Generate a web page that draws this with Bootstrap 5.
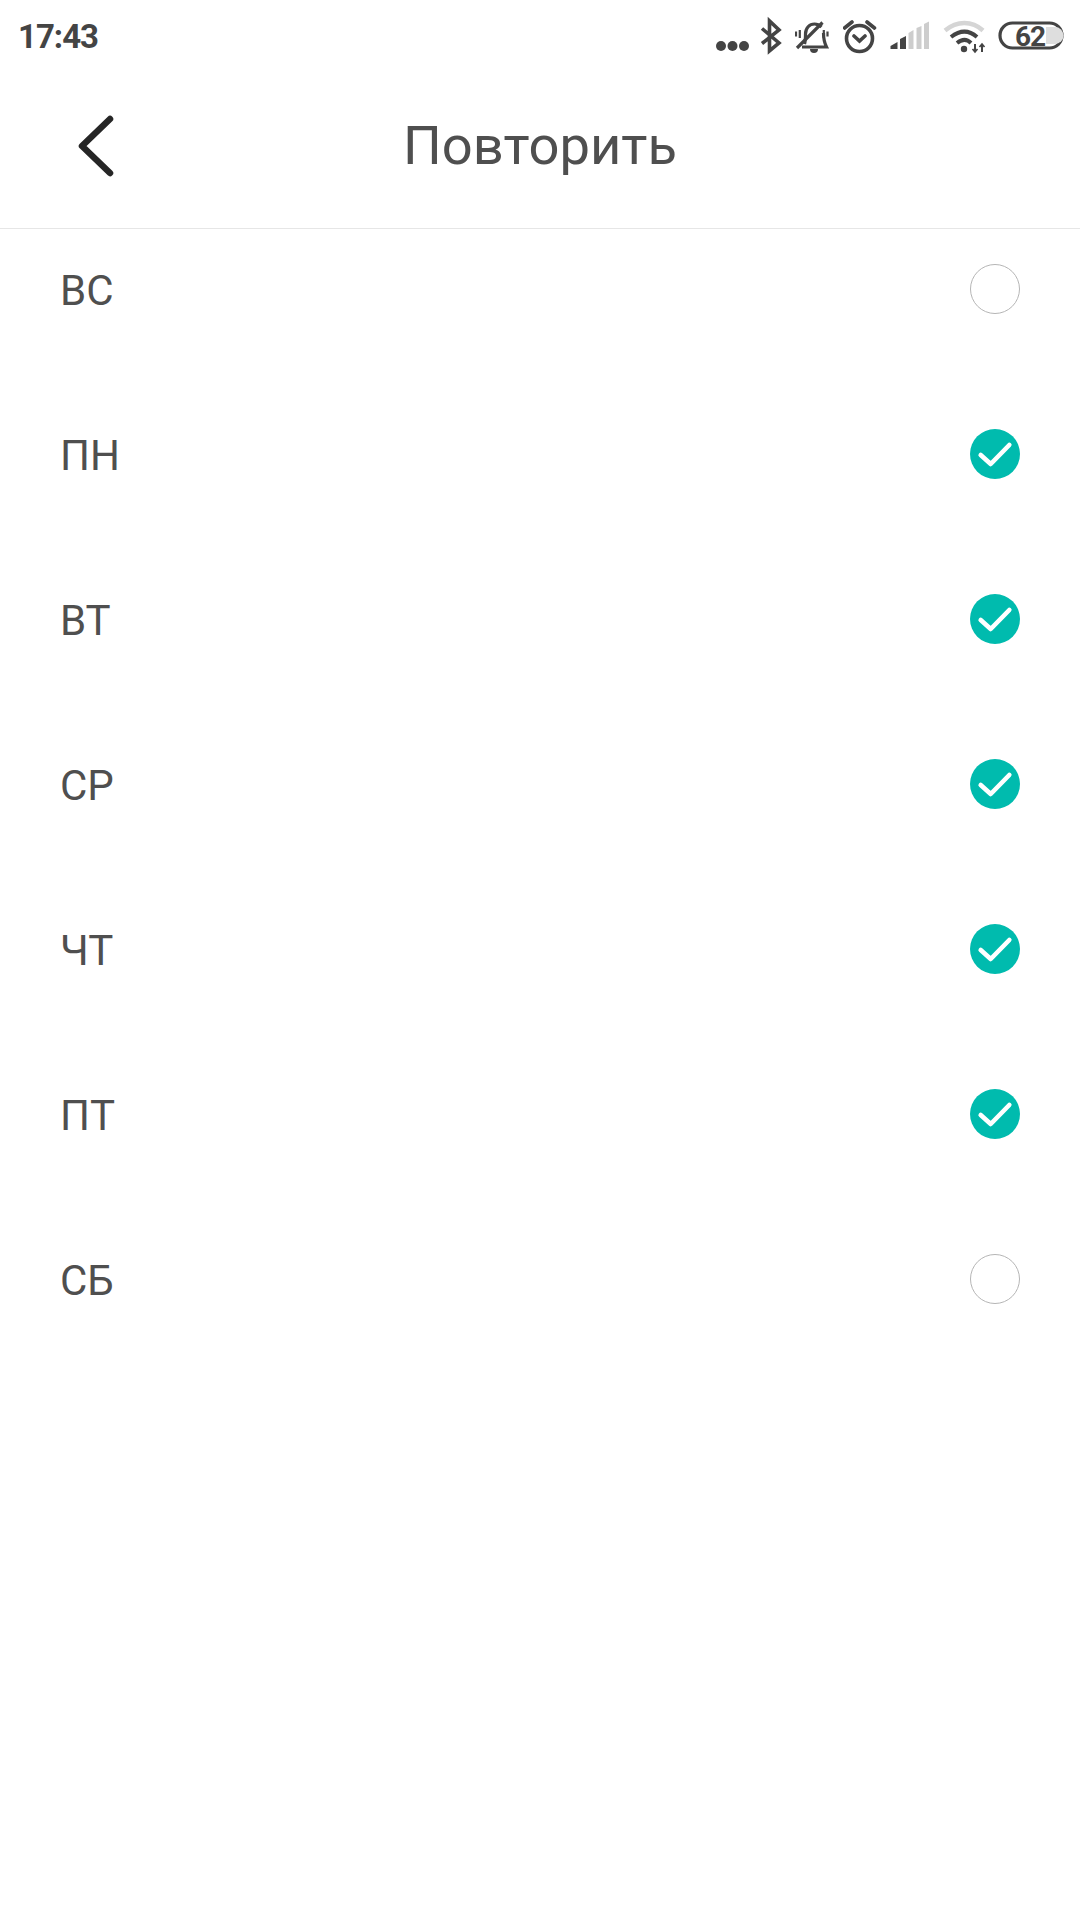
<!DOCTYPE html>
<html lang="ru">
<head>
    <meta charset="UTF-8">
    <meta name="viewport" content="width=device-width, initial-scale=1.0">
    <title>Повторить</title>
    <link rel="stylesheet" href="https://cdn.jsdelivr.net/npm/bootstrap@5.3.0/dist/css/bootstrap.min.css">
    <style>
        body {
            font-family: Roboto, "Liberation Sans", sans-serif;
            color: #4f4f4f;
            background: #fff;
            width: 1080px;
            height: 1920px;
            overflow: hidden;
        }
        .status-bar { height: 64px; padding: 0 16px 0 18px; }
        .status-time { font-size: 33px; font-weight: 700; letter-spacing: -1px; line-height: 1; color: #444; margin-top: 20px; }
        .status-icons { margin-top: 16px; }
        .status-icons svg { display: block; height: 40px; }
        .batt-level { letter-spacing: -1px; }
        .page-head { height: 165px; border-bottom: 1px solid #e6e6e6; }
        .head-side { width: 160px; padding-left: 78px; }
        .page-title { font-size: 54.3px; font-weight: 400; line-height: 1; margin: 0; color: #4f4f4f; }
        .day-list { padding: 35px 61px 0 60px; gap: 115px; }
        .day-row { height: 50px; }
        .day-name { font-size: 42px; line-height: 50px; position: relative; top: 2px; }
        .day-check { width: 50px; height: 50px; margin-right: -1px; display: block; }
    </style>
</head>
<body>
    <!-- status bar -->
    <div class="status-bar d-flex justify-content-between align-items-start">
        <div class="status-time">17:43</div>
        <div class="status-icons d-flex">
            <svg width="33" viewBox="716 16 33 40" fill="#444"><circle cx="721" cy="46" r="5"/><circle cx="732.5" cy="46" r="5"/><circle cx="744" cy="46" r="5"/></svg>
            <svg width="46" viewBox="749 16 46 40" fill="none" stroke="#444" stroke-width="3.6"><path d="M762 28.500 779 43 769.500 51V21L779 30 762 43.500"/></svg>
            <svg width="48" viewBox="795 16 48 40" fill="none" stroke="#444"><path d="M822.500 22.500 797 48" stroke-width="3.200"/><path d="M804.500 44c1-3 1-6 1-10 0-6 4-10 9-10 3 0 5 1 7 3M823.500 33c0 5 1 10 3 14H802" stroke-width="3.200"/><path d="M810 49h8a4 4 0 0 1-8 0z" fill="#444" stroke="none"/><path d="M796 31.500v5M799.800 30v8M823.800 30v8M827.500 31.500v5" stroke-width="2.200"/></svg>
            <svg width="47" viewBox="843 16 47 40" fill="none" stroke="#444" stroke-width="3.600"><circle cx="859.500" cy="38.500" r="13"/><path d="M844.500 28 852 22M867 22 874.500 28M854 36 859.500 41 865 36" stroke-linecap="round"/></svg>
            <svg width="53" viewBox="890 16 53 40"><path d="M890.500 49v-3l7-4v7zM900 49v-10l6-3v13z" fill="#444"/><path d="M908.500 49V33l5-3v19zM916.500 49V28l5-2v23zM924 49V24l5-2.500v27.500z" fill="#cdcdcd"/></svg>
            <svg width="55" viewBox="943 16 55 40" fill="none" stroke="#444"><path d="M945 30.500c12-10 27-10 38 0" stroke="#d5d5d5" stroke-width="4.400"/><path d="M951 37c9-7 18-7 26 0M957 43c5-4 10-4 14 0" stroke-width="4"/><circle cx="964" cy="49" r="3.200" fill="#444" stroke="none"/><path d="M975 44v8M982 44v8" stroke-width="2"/><path d="M972.500 49 975 52 977.500 49M979.500 47 982 44 984.500 47" stroke-width="1.600"/></svg>
            <svg width="66" viewBox="998 16 66 40"><rect x="1000" y="23" width="62" height="25" rx="12.500" fill="none" stroke="#444" stroke-width="3.200"/><path d="M1046 27h9a8.500 8.500 0 0 1 0 17h-9z" fill="#dedede"/><text class="batt-level" x="1030" y="45.500" text-anchor="middle" font-family="Roboto" font-weight="700" font-size="28" fill="#444">62</text></svg>
        </div>
    </div>

    <!-- header -->
    <div class="page-head d-flex align-items-center">
        <div class="head-side">
            <svg width="36" height="62" viewBox="0 0 36 62" class="d-block" fill="none" stroke="#262626" stroke-width="6.500" stroke-linecap="round" stroke-linejoin="round"><path d="M32 4 4 31 32 58"/></svg>
        </div>
        <h1 class="page-title flex-fill text-center">Повторить</h1>
        <div class="head-side"></div>
    </div>

    <!-- days -->
    <div class="day-list d-flex flex-column" id="days"></div>

    <script>
        const days = [
            ['ВС', false], ['ПН', true], ['ВТ', true], ['СР', true],
            ['ЧТ', true], ['ПТ', true], ['СБ', false]
        ];
        const on = '<svg class="day-check" viewBox="0 0 50 50"><circle cx="25" cy="25" r="25" fill="#00bbae"/><path d="M10.700 26 20.700 35 39.300 16" fill="none" stroke="#fff" stroke-width="4.600" stroke-linecap="round" stroke-linejoin="round"/></svg>';
        const off = '<svg class="day-check" viewBox="0 0 50 50"><circle cx="25" cy="25" r="24.500" fill="#fff" stroke="#b5b5b5" stroke-width="1"/></svg>';
        const list = document.getElementById('days');
        days.forEach(function (d) {
            list.insertAdjacentHTML('beforeend',
                `<div class="day-row d-flex justify-content-between align-items-center">
                    <span class="day-name">${d[0]}</span>${d[1] ? on : off}
                </div>`);
        });
    </script>
    <script src="https://cdn.jsdelivr.net/npm/bootstrap@5.3.0/dist/js/bootstrap.bundle.min.js"></script>
</body>
</html>
